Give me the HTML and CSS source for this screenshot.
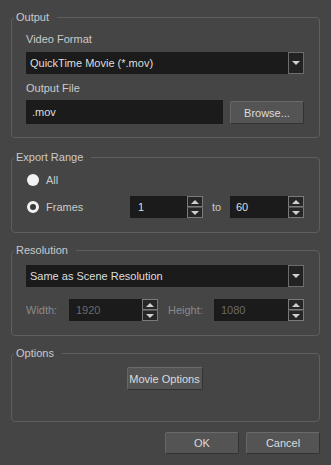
FILE: index.html
```html
<!DOCTYPE html>
<html lang="en">
<head>
    <meta charset="UTF-8">
    <meta name="viewport" content="width=device-width, initial-scale=1.0">
    <title>Export to QuickTime Movie</title>
    <link rel="stylesheet" href="styles.css">
</head>
<body>

<form class="dialog">
    <fieldset class="group group-output">
        <legend>Output</legend>
        <div class="label">Video Format</div>
        <div class="combo">
            <span class="combo-text">QuickTime Movie (*.mov)</span>
            <span class="combo-arrow"></span>
        </div>
        <div class="label label-file">Output File</div>
        <div class="file-row">
            <div class="field">.mov</div>
            <button type="button" class="btn btn-browse">Browse...</button>
        </div>
    </fieldset>

    <fieldset class="group group-range">
        <legend>Export Range</legend>
        <div class="radio-row">
            <span class="radio radio-all"></span>
            <span>All</span>
        </div>
        <div class="radio-row frames-row">
            <span class="radio radio-frames"></span>
            <span>Frames</span>
            <div class="range">
                <div class="spin spin-from">
                    <div class="spin-value">1</div>
                    <div class="spin-arrows"><span class="up"></span><span class="down"></span></div>
                </div>
                <span class="to">to</span>
                <div class="spin spin-to">
                    <div class="spin-value">60</div>
                    <div class="spin-arrows"><span class="up"></span><span class="down"></span></div>
                </div>
            </div>
        </div>
    </fieldset>

    <fieldset class="group group-res">
        <legend>Resolution</legend>
        <div class="combo">
            <span class="combo-text">Same as Scene Resolution</span>
            <span class="combo-arrow"></span>
        </div>
        <div class="size-row">
            <span class="size-label width-label">Width:</span>
            <div class="spin spin-size">
                <div class="spin-value disabled">1920</div>
                <div class="spin-arrows"><span class="up"></span><span class="down"></span></div>
            </div>
            <span class="size-label height-label">Height:</span>
            <div class="spin spin-size spin-height">
                <div class="spin-value disabled">1080</div>
                <div class="spin-arrows"><span class="up"></span><span class="down"></span></div>
            </div>
        </div>
    </fieldset>

    <fieldset class="group group-options">
        <legend>Options</legend>
        <div class="options-row">
            <button type="button" class="btn btn-movie">Movie Options</button>
        </div>
    </fieldset>

    <div class="actions">
        <button type="button" class="btn btn-action">OK</button>
        <button type="button" class="btn btn-action">Cancel</button>
    </div>
</form>

</body>
</html>
```

FILE: styles.css
```css
body {
    margin: 0;
    padding: 10px 11px 0;
    background-color: #454545;
    color: #d2d2d2;
    font-family: "Liberation Sans", Arial, sans-serif;
    font-size: 11px;
}

.dialog {
    margin: 0;
}

/* group boxes */
.group {
    margin: 0;
    padding: 8px 15px 13px 14px;
    border: 1px solid #5e5e5e;
    border-radius: 4px;
    min-width: 0;
}

.group legend {
    margin-left: -12px;
    padding: 0 8px 0 2px;
    line-height: 14px;
    color: #cacaca;
}

.group-range {
    margin-top: 12px;
    padding-bottom: 14px;
}

.group-res {
    margin-top: 10px;
    padding-bottom: 14px;
}

.group-options {
    margin-top: 10px;
    padding-top: 7px;
    padding-bottom: 31px;
}

.label {
    line-height: 14px;
    margin-bottom: 6px;
    color: #cacaca;
}

.label-file {
    margin-top: 7px;
    margin-bottom: 5px;
}

/* combo box */
.combo {
    display: flex;
    height: 22px;
    background-color: #1b1b1b;
}

.combo-text {
    flex: 1;
    line-height: 22px;
    padding-left: 4px;
    color: #dedede;
}

.combo-arrow {
    width: 14px;
    border: 1px solid #6c6c6c;
    background-color: #222;
    position: relative;
}

.combo-arrow::after {
    content: "";
    position: absolute;
    left: 3px;
    top: 8px;
    border-left: 4px solid transparent;
    border-right: 4px solid transparent;
    border-top: 4px solid #d0d0d0;
}

/* file row */
.file-row {
    display: flex;
    gap: 7px;
}

.field {
    width: 191px;
    height: 24px;
    line-height: 24px;
    padding-left: 6px;
    background-color: #1b1b1b;
    color: #dedede;
}

.btn {
    font-family: "Liberation Sans", Arial, sans-serif;
    font-size: 11px;
    white-space: nowrap;
    color: #dcdcdc;
    background-color: #545454;
    border: 1px solid #333;
    border-top-color: #6a6a6a;
    border-left-color: #666;
    border-radius: 2px;
    padding: 0;
    height: 23px;
}

.btn-browse {
    width: 74px;
    margin-top: 1px;
}

/* radios */
.radio-row {
    display: flex;
    align-items: center;
    gap: 7px;
    padding-left: 1px;
    height: 16px;
    color: #cacaca;
}

.frames-row {
    height: 22px;
    margin-top: 8px;
}

.radio {
    width: 12px;
    height: 12px;
    border-radius: 50%;
    box-sizing: border-box;
}

.radio-all {
    background-color: #f2f2f2;
}

.radio-frames {
    border: 3px solid #f2f2f2;
    background-color: #3a3a3a;
}

.range {
    margin-left: auto;
    display: flex;
    align-items: center;
}

.to {
    width: 27px;
    text-align: center;
    color: #cacaca;
}

/* spin boxes */
.spin {
    display: flex;
    height: 22px;
}

.spin-value {
    width: 49px;
    padding-left: 8px;
    line-height: 22px;
    background-color: #1b1b1b;
    color: #dedede;
}

.spin-to .spin-value {
    width: 52px;
    padding-left: 6px;
}

.spin-value.disabled {
    color: #6a6a6a;
}

.spin-arrows {
    width: 16px;
    display: flex;
    flex-direction: column;
}

.spin-arrows span {
    flex: 1;
    border: 1px solid #7a7a7a;
    background-color: #262626;
    position: relative;
}

.spin-arrows .down {
    border-top-color: #555;
}

.spin-arrows span::after {
    content: "";
    position: absolute;
    left: 3px;
    top: 3px;
    border-left: 4px solid transparent;
    border-right: 4px solid transparent;
}

.spin-arrows .up::after {
    border-bottom: 4px solid #cfcfcf;
}

.spin-arrows .down::after {
    border-top: 4px solid #cfcfcf;
}

/* resolution */
.size-row {
    display: flex;
    align-items: center;
    margin-top: 12px;
}

.size-label {
    color: #8a8a8a;
}

.width-label {
    width: 43px;
}

.height-label {
    width: 46px;
    margin-left: 10px;
}

.spin-size .spin-value {
    width: 66px;
    padding-left: 7px;
}

.spin-height .spin-value {
    width: 67px;
}

/* options */
.options-row {
    display: flex;
    justify-content: center;
}

.btn-movie {
    width: 76px;
    margin-left: -1px;
}

.actions {
    display: flex;
    justify-content: flex-end;
    gap: 7px;
    margin-top: 10px;
}

.btn-action {
    width: 74px;
    height: 22px;
}
```
